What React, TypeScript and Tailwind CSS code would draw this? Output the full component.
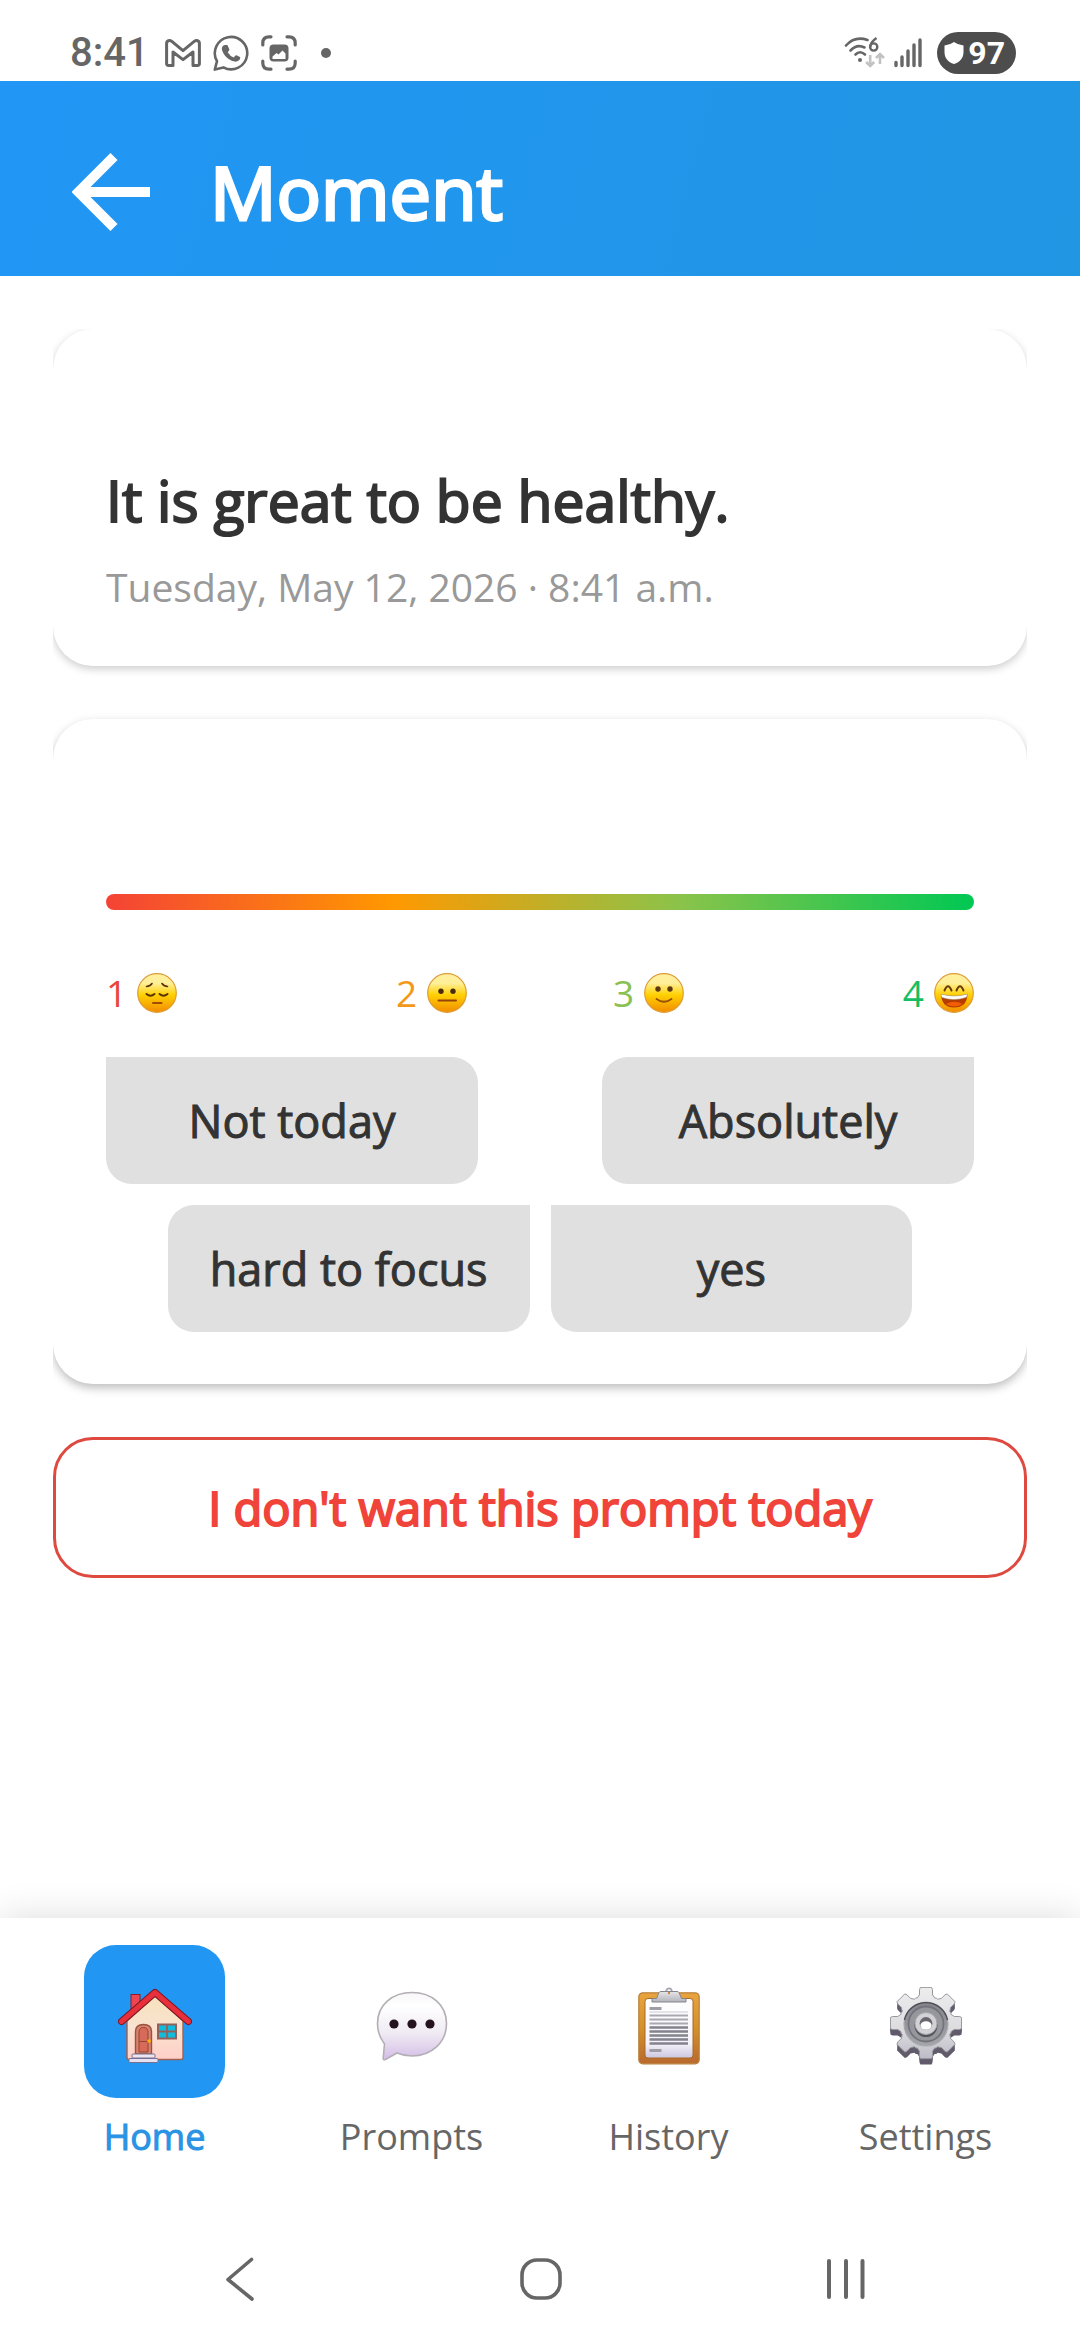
import React from "react";

function GmailIcon() {
  return (
    <svg width="36" height="28" viewBox="0 0 36 28" fill="none" stroke="#666" strokeWidth="3" strokeLinejoin="round" aria-hidden="true">
      <path d="M3.5 26.5Q1.6 26.5 1.6 24.6V4.6C1.6 1.6 4.6.8 6.8 2.4L18 11.6 29.2 2.4C31.4.8 34.4 1.6 34.4 4.6V24.6Q34.4 26.5 32.5 26.5H28V13L18 20.6 8 13V26.5Z" />
    </svg>
  );
}

function WhatsAppIcon() {
  return (
    <svg width="36" height="36" viewBox="0 0 36 36" aria-hidden="true">
      <path d="M1.8 34.6 4 26.2A16.2 16.2 0 1 1 10.4 32.4Z" fill="none" stroke="#666" strokeWidth="2.6" strokeLinejoin="round" />
      <path d="M11.8 10h2.2q.6.1.8.7l1.5 3.6q.2.6-.2 1.1l-1.4 1.8q2.4 4 6 5.2l1.8-1.9q.4-.4 1-.2l3.4 1.6q.5.3.4.9c-.3 2.8-3 4.2-5.6 3.8c-6-1-11.6-6.6-12.8-12c-.4-2.2.9-4.4 2.9-4.6z" fill="#666" />
    </svg>
  );
}

function CaptureIcon() {
  return (
    <svg width="36" height="36" viewBox="0 0 36 36" aria-hidden="true">
      <path d="M1.8 10V8Q1.8 1.8 8 1.8H10M26 1.8H28Q34.2 1.8 34.2 8V10M34.2 26V28Q34.2 34.2 28 34.2H26M10 34.2H8Q1.8 34.2 1.8 28V26" fill="none" stroke="#666" strokeWidth="3.2" strokeLinecap="round" />
      <rect x="8.5" y="9.5" width="19" height="17" rx="4" fill="#666" />
      <path d="M11.5 24V21.5L15.5 18 17.5 19.5 21.5 15.5 24.5 18.5V24Z" fill="#fff" />
    </svg>
  );
}

function WifiIcon() {
  return (
    <svg width="42" height="34" viewBox="0 0 42 34" aria-hidden="true">
      <g fill="none" stroke="#666" strokeWidth="2.6" strokeLinecap="round">
        <path d="M2 9.5Q11 -.5 23.5 4" />
        <path d="M6.5 14.5Q13 7.5 20.5 11.5" />
        <path d="M11.5 18.5Q16 14 21 18.5" />
      </g>
      <circle cx="16" cy="24" r="2" fill="#666" />
      <path d="M32.5 2Q26.5 6 26 11.5" fill="none" stroke="#666" strokeWidth="2.4" />
      <circle cx="29.7" cy="11" r="3.6" fill="none" stroke="#666" strokeWidth="2.4" />
      <g fill="none" stroke="#c2c2c2" strokeWidth="2.6">
        <path d="M26.2 19V30M22.2 26 26.2 30 30.200 26M36 28V18M32 22 36 18 40 22" />
      </g>
    </svg>
  );
}

function SignalIcon() {
  return (
    <svg width="28" height="30" viewBox="0 0 28 30" fill="none" stroke="#666" strokeWidth="3.4" strokeLinecap="round" aria-hidden="true">
      <path d="M2 24.5V27.5M8 19V27.5M14 13V27.5M20 7V27.5M26 2V27.5" />
    </svg>
  );
}

function FaceBase({ children }: { children: React.ReactNode }) {
  return (
    <svg width="40" height="40" viewBox="0 0 40 40" aria-hidden="true" className="shrink-0">
      <defs>
        <linearGradient id="face" x1="0" y1="0" x2="0" y2="1">
          <stop offset="0" stopColor="#fff0a0" />
          <stop offset=".25" stopColor="#ffef98" />
          <stop offset=".55" stopColor="#ffd000" />
          <stop offset="1" stopColor="#f28c00" />
        </linearGradient>
      </defs>
      <circle cx="20" cy="20" r="19.300" fill="url(#face)" stroke="#dd9c35" strokeWidth="1.200" />
      {children}
    </svg>
  );
}

function PensiveFace() {
  return (
    <FaceBase>
      <g fill="none" stroke="#5b3207" strokeWidth="1.600" strokeLinecap="round">
        <path d="M9.500 13.500Q13.500 13 15 10.500M30.500 13.500Q26.500 13 25 10.500" />
        <path d="M9.500 21Q13.500 24.500 17.500 21M22.500 21Q26.500 24.500 30.500 21" strokeWidth="2" />
      </g>
      <path d="M16 30H24.500" stroke="#a34a07" strokeWidth="2" strokeLinecap="round" />
    </FaceBase>
  );
}

function NeutralFace() {
  return (
    <FaceBase>
      <circle cx="14" cy="18.300" r="2.700" fill="#4b2a0b" />
      <circle cx="26" cy="18.300" r="2.700" fill="#4b2a0b" />
      <path d="M11.500 27.500H29" stroke="#95440a" strokeWidth="2" strokeLinecap="round" />
    </FaceBase>
  );
}

function SmileFace() {
  return (
    <FaceBase>
      <circle cx="14" cy="16" r="2.700" fill="#5f3a10" />
      <circle cx="26" cy="16" r="2.700" fill="#5f3a10" />
      <path d="M12.500 26Q20 31.500 27.500 26" fill="none" stroke="#95500a" strokeWidth="1.800" strokeLinecap="round" />
    </FaceBase>
  );
}

function GrinFace() {
  return (
    <FaceBase>
      <path d="M10.500 17.500Q14 9 17.500 17.500M22.500 17.500Q26 9 29.500 17.500" fill="none" stroke="#6b3c08" strokeWidth="2" strokeLinecap="round" />
      <path d="M7 21Q20 25 33.500 21Q33 34.500 20 34.500Q7.500 34.500 7 21Z" fill="#b43c00" />
      <path d="M12 31Q20 26.500 28.500 31Q20 36 12 31Z" fill="#f25c05" />
      <path d="M7 21Q20 25 33.500 21Q33.500 23.500 32 24.500Q20 28.500 8 24.500Q7 23.500 7 21Z" fill="#fff" stroke="#a99a78" strokeWidth=".6" />
    </FaceBase>
  );
}

function HouseIcon() {
  return (
    <svg width="74" height="76" viewBox="0 0 74 76" aria-hidden="true">
      <defs>
        <linearGradient id="wall" x1="0" y1="0" x2="0" y2="1">
          <stop offset="0" stopColor="#f6e2bd" />
          <stop offset=".5" stopColor="#f9e2cf" />
          <stop offset="1" stopColor="#ffcfc7" />
        </linearGradient>
      </defs>
      <rect x="13" y="6.500" width="9" height="18" fill="#ee4552" stroke="#8c1c26" strokeWidth="1" />
      <path d="M9 33 37 8 65 33V69.500Q65 71.500 63 71.500H11Q9 71.500 9 69.500Z" fill="url(#wall)" stroke="#a06050" strokeWidth="1.400" />
      <path d="M3.500 33.500 37 4.500 70.500 33.500" fill="none" stroke="#7d1620" strokeWidth="7" strokeLinecap="round" strokeLinejoin="round" />
      <path d="M3.500 33.500 37 4.500 70.500 33.500" fill="none" stroke="#e8303c" strokeWidth="5" strokeLinecap="round" strokeLinejoin="round" />
      <path d="M17.500 66V43.500Q17.500 36.500 25.500 36.500Q33.500 36.500 33.500 43.500V66Z" fill="#d9826c" stroke="#9c5140" strokeWidth="1.400" />
      <path d="M21 64V44.500Q21 39.500 25.500 39.500Q30 39.500 30 44.500V64Z" fill="#d76a58" stroke="#8f4437" strokeWidth="1" />
      <path d="M21 53.500H30" stroke="#8f4437" strokeWidth="1" />
      <circle cx="31" cy="53" r="1.800" fill="#ffb200" />
      <rect x="40" y="36.500" width="18" height="14" fill="#10bcdc" stroke="#94605a" strokeWidth="2" />
      <path d="M49 36.500V50.500M40 43.500H58" stroke="#94605a" strokeWidth="1.800" />
      <rect x="14" y="66" width="23" height="4" rx="1" fill="#eee4f2" stroke="#77728c" strokeWidth="1" />
      <rect x="11" y="70.500" width="29" height="4" rx="1" fill="#e6e0f2" stroke="#77728c" strokeWidth="1" />
    </svg>
  );
}

function BubbleIcon() {
  return (
    <svg width="72" height="70" viewBox="0 0 72 70" aria-hidden="true">
      <defs>
        <linearGradient id="bubble" x1="0" y1="0" x2="0" y2="1">
          <stop offset="0" stopColor="#f7f7f7" />
          <stop offset=".2" stopColor="#fff" />
          <stop offset=".6" stopColor="#f0ebf3" />
          <stop offset="1" stopColor="#d3bde6" />
        </linearGradient>
      </defs>
      <path d="M36 1.500C56 1.500 70.500 14 70.500 32.500C70.500 51 56 65 36 65Q28 65 21 62L9.500 68.500Q7 69.500 7.200 67L8.500 53Q1.500 44 1.500 32.500C1.500 14 16 1.500 36 1.500Z" fill="url(#bubble)" stroke="#b3afb5" strokeWidth="1.600" />
      <circle cx="18" cy="33" r="4.600" fill="#25141f" />
      <circle cx="36" cy="33" r="4.600" fill="#25141f" />
      <circle cx="54" cy="33" r="4.600" fill="#25141f" />
    </svg>
  );
}

function ClipboardIcon() {
  return (
    <svg width="62" height="78" viewBox="0 0 62 78" aria-hidden="true">
      <defs>
        <linearGradient id="board" x1="0" y1="0" x2="0" y2="1">
          <stop offset="0" stopColor="#e9a440" />
          <stop offset=".5" stopColor="#d4902a" />
          <stop offset="1" stopColor="#b9692e" />
        </linearGradient>
        <linearGradient id="paper" x1="0" y1="0" x2="0" y2="1">
          <stop offset="0" stopColor="#fff" />
          <stop offset=".75" stopColor="#f5f3fa" />
          <stop offset="1" stopColor="#cdc6e0" />
        </linearGradient>
        <linearGradient id="clip" x1="0" y1="0" x2="0" y2="1">
          <stop offset="0" stopColor="#e6e6ea" />
          <stop offset="1" stopColor="#b2b2ba" />
        </linearGradient>
      </defs>
      <rect x=".8" y="5.800" width="60.400" height="71" rx="4" fill="url(#board)" stroke="#b9803a" strokeWidth="1.200" />
      <rect x="7" y="11.500" width="48" height="59.500" rx="3" fill="url(#paper)" stroke="#a36b2b" strokeWidth="1" />
      <path d="M11.500 21.500H23.500M11.500 63.500H23.500" stroke="#9e9da5" strokeWidth="2.800" />
      <path d="M11.500 25H50" stroke="#dddde0" strokeWidth="1.400" />
      <path d="M11.500 28.500H50M11.500 32.500H50M11.500 36.500H50" stroke="#a9a8b0" strokeWidth="2.200" />
      <path d="M11.500 40.500H50M11.500 44.500H50M11.500 48.500H50M11.500 52.500H50M11.500 56.500H50" stroke="#83828d" strokeWidth="2.400" />
      <circle cx="31" cy="4" r="2.700" fill="none" stroke="#a4a7b2" strokeWidth="1.800" />
      <path d="M14 11.500H18.500L21 5.500Q21.500 4.500 23 4.500H39Q40.500 4.500 41 5.500L43.500 11.500H48V15H14Z" fill="url(#clip)" stroke="#83848e" strokeWidth="1" />
      <circle cx="31" cy="6" r="1.200" fill="#c58a3c" />
    </svg>
  );
}

// Outline of one tooth as [degrees from its axis, radius]; repeated every 45 degrees.
const TOOTH = [
  [-22.5, 27],
  [-19, 26.5],
  [-13, 29],
  [-11, 34],
  [-9, 36],
  [9, 36],
  [11, 34],
  [13, 29],
  [19, 26.5],
];

const GEAR_PATH =
  "M" +
  [0, 45, 90, 135, 180, 225, 270, 315]
    .flatMap((axis) =>
      TOOTH.map(([offset, radius]) => {
        const angle = ((axis + offset) * Math.PI) / 180;
        return `${(36 + radius * Math.sin(angle)).toFixed(1)} ${(36 - radius * Math.cos(angle)).toFixed(1)}`;
      }),
    )
    .join("L") +
  "Z";

function GearIcon() {
  return (
    <svg width="72" height="78" viewBox="0 0 72 78" aria-hidden="true">
      <defs>
        <linearGradient id="gear" x1="0" y1="0" x2="0" y2="1">
          <stop offset="0" stopColor="#ededee" />
          <stop offset=".6" stopColor="#dcdcdf" />
          <stop offset="1" stopColor="#bdbbc6" />
        </linearGradient>
        <linearGradient id="dish" x1="0" y1="0" x2="0" y2="1">
          <stop offset="0" stopColor="#85858c" />
          <stop offset="1" stopColor="#a4a4ab" />
        </linearGradient>
      </defs>
      <g fill="#625b6c">
        <path d={GEAR_PATH} transform="translate(0 6)" />
        <path d={GEAR_PATH} transform="translate(0 4)" />
        <path d={GEAR_PATH} transform="translate(0 2)" />
      </g>
      <path d={GEAR_PATH} fill="url(#gear)" stroke="#98979e" strokeWidth="1" strokeLinejoin="round" />
      <circle cx="36" cy="37" r="22" fill="url(#dish)" stroke="#aaa9af" strokeWidth="1.200" />
      <path d="M14.500 33A22 22 0 0 1 57.500 33" fill="none" stroke="#4e4c55" strokeWidth="1.400" />
      <circle cx="36" cy="37" r="17.500" fill="#96969d" stroke="#74737c" strokeWidth="1.800" />
      <circle cx="36" cy="38.500" r="11.500" fill="#55535c" />
      <circle cx="36" cy="36.500" r="11" fill="#d2d2d6" stroke="#a5a5ab" strokeWidth="1" />
      <circle cx="36" cy="36.500" r="6.400" fill="#69666f" />
      <ellipse cx="36" cy="38.500" rx="5.600" ry="4.200" fill="#fff" />
    </svg>
  );
}

const RATINGS = [
  { value: 1, name: "Sad", Face: PensiveFace, style: "justify-start text-[#e8473b]" },
  { value: 2, name: "Neutral", Face: NeutralFace, style: "justify-center text-[#f29a17]" },
  { value: 3, name: "Content", Face: SmileFace, style: "justify-center text-[#8bc053]" },
  { value: 4, name: "Happy", Face: GrinFace, style: "justify-end text-[#16bd62]" },
];

const TABS = [
  { label: "Home", Icon: HouseIcon, active: true },
  { label: "Prompts", Icon: BubbleIcon, active: false },
  { label: "History", Icon: ClipboardIcon, active: false },
  { label: "Settings", Icon: GearIcon, active: false },
];

const answer =
  "h-[127px] bg-[#e0e0e0] text-center text-[45px] leading-[64px] text-[#333] [-webkit-text-stroke:1px_#333]";

function StatusBar() {
  return (
    <div className="flex h-[81px] items-center justify-between pt-[25px] pr-16 pl-[70px] font-[Roboto,sans-serif]">
      <div className="flex items-center gap-3">
        <span className="mr-1 text-[40px] leading-none font-medium text-[#666]">8:41</span>
        <GmailIcon />
        <WhatsAppIcon />
        <CaptureIcon />
        <span className="ml-3 size-[10px] rounded-full bg-[#666]" />
      </div>
      <div className="flex items-center">
        <WifiIcon />
        <span className="ml-2">
          <SignalIcon />
        </span>
        <span className="ml-[15px] flex h-[42px] items-center gap-1 rounded-full bg-[#4d4d4d] pr-[11px] pl-[7px] text-[32px] leading-none font-bold text-white">
          <svg width="20" height="22" viewBox="0 0 20 22" fill="#fff" aria-hidden="true">
            <path d="M10 0Q14 3 19.500 3.500V10C19.500 16 16 20 10 22C4 20 .5 16 .5 10V3.500Q6 3 10 0Z" />
          </svg>
          97
        </span>
      </div>
    </div>
  );
}

export default function App() {
  return (
    <div className="flex min-h-screen flex-col bg-white font-['Open_Sans',sans-serif]">
      <StatusBar />
      <header className="flex h-[195px] items-center gap-[60px] bg-linear-105 from-[#2196f5] to-[#2196e3] pt-[26px] pl-[72px]">
        <button type="button" aria-label="Back">
          <svg width="78" height="78" viewBox="0 0 78 78" fill="none" stroke="#fff" strokeWidth="10" aria-hidden="true">
            <path d="M78 39H8M42 3.500 6.500 39 42 74.500" />
          </svg>
        </button>
        <h1 className="text-[74px] leading-[108px] text-white [-webkit-text-stroke:3px_white]">Moment</h1>
      </header>

      <main className="mx-[53px] mt-[53px] flex flex-1 flex-col gap-[53px] overflow-clip">
        <section className="rounded-[40px] bg-white px-[53px] pt-[131px] pb-[52px] shadow-[0_3px_8px_rgba(0,0,0,0.2)]">
          <h2 className="text-[57px] leading-[80px] text-[#333] [-webkit-text-stroke:2px_#333]">It is great to be healthy.</h2>
          <p className="mt-5 text-[39px] leading-[54px] text-[#999]">Tuesday, May 12, 2026 · 8:41 a.m.</p>
        </section>

        <section className="rounded-[40px] bg-white px-[53px] pt-[175px] pb-[52px] shadow-[0_4px_10px_rgba(0,0,0,0.26)]">
          <div className="h-4 rounded-full bg-[linear-gradient(to_right,#f44336,#ff9800_33%,#8bc34a_66%,#00c853)]" />
          <div className="mt-[58px] grid grid-cols-4">
            {RATINGS.map(({ value, name, Face, style }) => (
              <div key={value} className={`flex items-center gap-[10px] text-[37px] leading-[50px] ${style}`} title={name}>
                {value}
                <Face />
              </div>
            ))}
          </div>
          <div className="mt-[39px] flex justify-between">
            <button type="button" className={`${answer} w-3/7 rounded-[26px] rounded-tl-none`}>Not today</button>
            <button type="button" className={`${answer} w-3/7 rounded-[26px] rounded-tr-none`}>Absolutely</button>
          </div>
          <div className="mx-auto mt-[21px] grid w-fit grid-cols-2 gap-[21px]">
            <button type="button" className={`${answer} rounded-[26px] rounded-tr-none px-[42px]`}>hard to focus</button>
            <button type="button" className={`${answer} rounded-[26px] rounded-tl-none px-[42px]`}>yes</button>
          </div>
        </section>

        <button type="button" className="h-[141px] rounded-[40px] border-3 border-[#de4a3f] text-[47px] leading-[64px] text-[#f0433a] [-webkit-text-stroke:2px_#f0433a]">
          I don't want this prompt today
        </button>
      </main>

      <nav className="grid grid-cols-4 bg-white px-[26px] pt-[27px] pb-[56px] shadow-[0_0_36px_rgba(0,0,0,0.14)]">
        {TABS.map(({ label, Icon, active }) => (
          <a key={label} href={`#${label.toLowerCase()}`} aria-current={active ? "page" : undefined} className="flex flex-col items-center gap-[14px]">
            <span className={`flex h-[153px] w-[141px] items-center justify-center rounded-[32px] pt-2 ${active ? "bg-[#2196f3]" : ""}`}>
              <Icon />
            </span>
            <span className={`text-[36px] leading-[50px] ${active ? "text-[#2b93e4] [-webkit-text-stroke:1px_#2b93e4]" : "text-[#666]"}`}>{label}</span>
          </a>
        ))}
      </nav>

      <div className="relative flex h-[122px] items-center justify-between bg-white pr-[214px] pl-[225px]">
        <button type="button" aria-label="System back">
          <svg width="30" height="44" viewBox="0 0 30 44" fill="none" stroke="#666" strokeWidth="3.600" strokeLinecap="round" strokeLinejoin="round" aria-hidden="true">
            <path d="M26.500 2.500 3 22.500 27 42" />
          </svg>
        </button>
        <button type="button" aria-label="System home">
          <svg width="42" height="42" viewBox="0 0 42 42" fill="none" stroke="#666" strokeWidth="3.600" aria-hidden="true">
            <rect x="2" y="2" width="38" height="38" rx="15" />
          </svg>
        </button>
        <button type="button" aria-label="Recent apps">
          <svg width="40" height="42" viewBox="0 0 40 42" fill="none" stroke="#666" strokeWidth="4" strokeLinecap="round" aria-hidden="true">
            <path d="M3 3V39M20 3V39M36.500 3V39" />
          </svg>
        </button>
      </div>
    </div>
  );
}
